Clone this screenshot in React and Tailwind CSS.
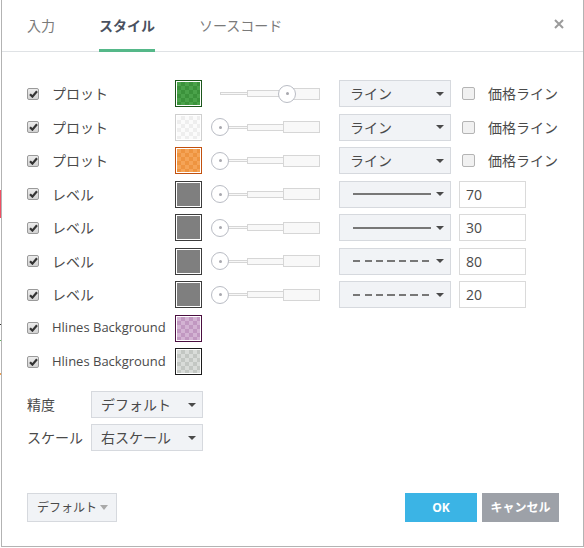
import React from "react";

const plots = [
  { knob: "right", sw: "green" },
  { knob: "left", sw: "white" },
  { knob: "left", sw: "orange" },
];

const levels = [
  { dash: false, v: "70" },
  { dash: false, v: "30" },
  { dash: true, v: "80" },
  { dash: true, v: "20" },
];

function Check() {
  return (
    <span className="flex h-[12px] w-[12px] shrink-0 items-center justify-center rounded-[2px] border border-[#9a9a9a] bg-[linear-gradient(#ececec,#d2d2d2)]">
      <svg width="9" height="8" viewBox="0 0 9 8">
        <path d="M1 4.2 L3.4 6.6 L8 1.2" fill="none" stroke="#333" strokeWidth="2.2" />
      </svg>
    </span>
  );
}

function Uncheck() {
  return <span className="block h-[13px] w-[13px] shrink-0 rounded-[2px] border border-[#b4b4b4] bg-[#f1f1f1]" />;
}

function Swatch({ kind }) {
  if (kind === "green")
    return (
      <span className="block h-[27px] w-[27px] shrink-0 border border-[#1b561b] p-[1px]">
        <span className="block h-full w-full bg-[conic-gradient(#3b923b_25%,#4aa24a_0_50%,#3b923b_0_75%,#4aa24a_0)] bg-[length:8px_8px]" />
      </span>
    );
  if (kind === "white")
    return (
      <span className="block h-[27px] w-[27px] shrink-0 border border-[#cfcfcf] p-[1px]">
        <span className="block h-full w-full bg-[conic-gradient(#eeeeee_25%,#fbfbfb_0_50%,#eeeeee_0_75%,#fbfbfb_0)] bg-[length:8px_8px]" />
      </span>
    );
  if (kind === "orange")
    return (
      <span className="block h-[27px] w-[27px] shrink-0 border border-[#c2500e] p-[1px]">
        <span className="block h-full w-full bg-[conic-gradient(#ee9440_25%,#f5a457_0_50%,#ee9440_0_75%,#f5a457_0)] bg-[length:8px_8px]" />
      </span>
    );
  if (kind === "purple")
    return (
      <span className="block h-[27px] w-[27px] shrink-0 border border-[#4a0e40] p-[1px]">
        <span className="block h-full w-full bg-[conic-gradient(#c198c1_25%,#d3b3d3_0_50%,#c198c1_0_75%,#d3b3d3_0)] bg-[length:8px_8px]" />
      </span>
    );
  if (kind === "gray")
    return (
      <span className="block h-[27px] w-[27px] shrink-0 border border-[#1c1c1c] p-[1px]">
        <span className="block h-full w-full bg-[conic-gradient(#c3c7c3_25%,#d9dcd9_0_50%,#c3c7c3_0_75%,#d9dcd9_0)] bg-[length:8px_8px]" />
      </span>
    );
  return (
    <span className="block h-[27px] w-[27px] shrink-0 border-[1.5px] border-[#3c3c3c] p-[1px]">
      <span className="block h-full w-full bg-[#7f7f7f]" />
    </span>
  );
}

function Slider({ knob }) {
  return (
    <div className="relative ml-[9px] flex h-[18px] w-[110px] shrink-0 items-center">
      <div className="ml-[9px] flex items-center">
        <span className="block h-[3px] w-[27px] border border-r-0 border-[#d6d6d6] bg-[#f8f8f8]" />
        <span className="block h-[7px] w-[36px] border border-r-0 border-[#d6d6d6] bg-[#f8f8f8]" />
        <span className="block h-[12px] w-[37px] border border-[#d6d6d6] bg-[#f8f8f8]" />
      </div>
      <span
        className={
          knob === "right"
            ? "absolute left-[67px] top-0 flex h-[18px] w-[18px] items-center justify-center rounded-full border border-[#b9bcc4] bg-white"
            : "absolute left-0 top-0 flex h-[18px] w-[18px] items-center justify-center rounded-full border border-[#b9bcc4] bg-white"
        }
      >
        <span className="block h-[3px] w-[3px] rounded-full bg-[#a8a8ae]" />
      </span>
    </div>
  );
}

function Arrow() {
  return <span className="block h-0 w-0 border-x-[4px] border-t-[4px] border-x-transparent border-t-[#4a4a4a]" />;
}

function Select({ children, className }) {
  return (
    <div className={"flex h-[27px] w-[112px] shrink-0 items-center justify-between border border-[#d6d9de] bg-[#f1f3f6] pr-[6px] " + className}>
      {children}
      <Arrow />
    </div>
  );
}

export default function App() {
  return (
    <div className="relative h-[548px] w-[584px] overflow-hidden bg-white font-['Open_Sans','Noto_Sans_CJK_JP',sans-serif] text-[#4a4a4a]">
      <span className="absolute left-0 top-[190px] block h-[28px] w-[1px] bg-[#ef4f63]" />
      <span className="absolute left-0 top-[324px] block h-[1px] w-[1px] bg-[#333]" />
      <span className="absolute left-0 top-[340px] block h-[1px] w-[1px] bg-[#5cb85c]" />
      <span className="absolute left-0 top-[373px] block h-[2px] w-[1px] bg-[#f0a050]" />

      <div className="ml-[1px] flex h-[547px] w-[583px] flex-col border border-t-0 border-[#b3b3b3] bg-white">
        {/* header */}
        <div className="flex h-[52px] shrink-0 items-center justify-between border-b border-[#dfe2e5] pl-[25px] pr-[19px]">
          <div className="flex h-full items-center gap-[44px] text-[14px]">
            <span className="text-[#7a7a7a]">入力</span>
            <span className="relative flex h-full items-center font-bold text-[#4a5160]">
              スタイル
              <span className="absolute bottom-[-1px] left-0 block h-[3px] w-full bg-[#55b889]" />
            </span>
            <span className="text-[#7a7a7a]">ソースコード</span>
          </div>
          <svg width="10" height="10" viewBox="0 0 10 10" className="mb-[4px]">
            <path d="M1 1 L9 9 M9 1 L1 9" stroke="#9b9b9b" strokeWidth="2" />
          </svg>
        </div>

        {/* rows */}
        <div className="flex flex-col gap-[6.5px] pl-[25px] pt-[28px] text-[14px]">
          {plots.map((p, i) => (
            <div key={"p" + i} className="flex h-[27px] items-center">
              <Check />
              <span className="ml-[13px] w-[123px] shrink-0">プロット</span>
              <Swatch kind={p.sw} />
              <Slider knob={p.knob} />
              <Select className="ml-[18px] pl-[10px]">
                <span>ライン</span>
              </Select>
              <span className="ml-[11px]">
                <Uncheck />
              </span>
              <span className="ml-[13px]">価格ライン</span>
            </div>
          ))}
          {levels.map((l, i) => (
            <div key={"l" + i} className="flex h-[27px] items-center">
              <Check />
              <span className="ml-[13px] w-[123px] shrink-0">レベル</span>
              <Swatch kind="level" />
              <Slider knob="left" />
              <Select className="ml-[18px] pl-[13px]">
                {l.dash ? (
                  <span className="block h-[2px] w-[76px] bg-[repeating-linear-gradient(90deg,#777_0_7px,transparent_7px_11.5px)]" />
                ) : (
                  <span className="block h-[2px] w-[78px] bg-[#777]" />
                )}
              </Select>
              <div className="ml-[8px] flex h-[27px] w-[67px] items-center border border-[#dadada] bg-white pl-[6px]">
                {l.v}
              </div>
            </div>
          ))}
          <div className="flex h-[27px] items-center">
            <Check />
            <span className="ml-[13px] w-[123px] shrink-0 text-[13px]">Hlines Background</span>
            <Swatch kind="purple" />
          </div>
          <div className="flex h-[27px] items-center">
            <Check />
            <span className="ml-[13px] w-[123px] shrink-0 text-[13px]">Hlines Background</span>
            <Swatch kind="gray" />
          </div>
        </div>

        {/* precision / scale */}
        <div className="mt-[16px] flex flex-col gap-[6px] pl-[25px] text-[14px]">
          <div className="flex items-center">
            <span className="w-[64px]">精度</span>
            <Select className="pl-[9px]">
              <span>デフォルト</span>
            </Select>
          </div>
          <div className="flex items-center">
            <span className="w-[64px]">スケール</span>
            <Select className="pl-[9px]">
              <span>右スケール</span>
            </Select>
          </div>
        </div>

        {/* footer */}
        <div className="mt-auto flex items-center justify-between pb-[24px] pl-[25px] pr-[24px]">
          <div className="flex h-[29px] w-[90px] items-center justify-between border border-[#d6d9de] bg-[#f1f3f6] pl-[9px] pr-[8px] text-[12px]">
            <span>デフォルト</span>
            <span className="block h-0 w-0 border-x-[4px] border-t-[5px] border-x-transparent border-t-[#a9a9a9]" />
          </div>
          <div className="flex gap-[5px] text-[12px] font-bold text-white">
            <span className="flex h-[29px] w-[72px] items-center justify-center bg-[#3bb4e5]">OK</span>
            <span className="flex h-[29px] w-[77px] items-center justify-center bg-[#9da1a8]">キャンセル</span>
          </div>
        </div>
      </div>
    </div>
  );
}
